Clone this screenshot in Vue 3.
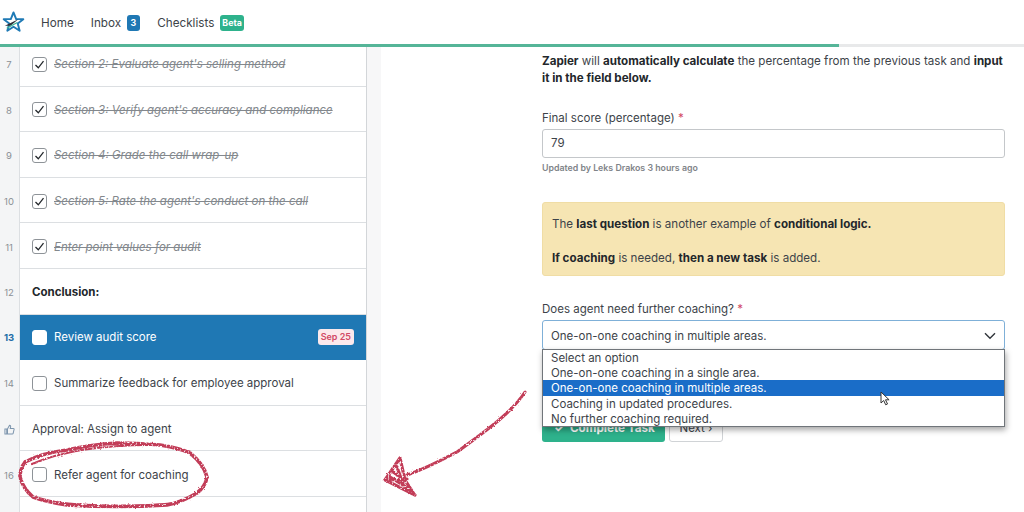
<script setup>
const doneTasks = [
  { num: 7, label: "Section 2: Evaluate agent's selling method" },
  { num: 8, label: "Section 3: Verify agent's accuracy and compliance" },
  { num: 9, label: 'Section 4: Grade the call wrap-up' },
  { num: 10, label: "Section 5: Rate the agent's conduct on the call" },
  { num: 11, label: 'Enter point values for audit' }
]

const options = [
  'Select an option',
  'One-on-one coaching in a single area.',
  'One-on-one coaching in multiple areas.',
  'Coaching in updated procedures.',
  'No further coaching required.'
]
</script>

<template>
  <div class="page">
    <header class="topbar">
      <svg class="logo" width="25" height="25" viewBox="0 0 26 26">
        <path d="M13 2.500l2.800 7h7.400l-5.800 4.600 2 7.500-6.400-4.200-6.400 4.200 2-7.500L2.800 9.500h7.400z" fill="none" stroke="#1f7ab5" stroke-width="2" stroke-linejoin="round" />
        <path d="M4 16.500l14-7-8 7z" fill="#2a2f36" />
        <path d="M6 19l11-6" stroke="#3cb295" stroke-width="1.300" />
      </svg>
      <nav class="nav">
        <span class="nav-item">Home</span>
        <span class="nav-item">Inbox <b class="badge blue">3</b></span>
        <span class="nav-item">Checklists <b class="badge green">Beta</b></span>
      </nav>
    </header>
    <div class="progress"><div class="progress-fill"></div></div>

    <div class="content">
      <aside class="sidebar">
        <div v-for="t in doneTasks" :key="t.num" class="row">
          <div class="num">{{ t.num }}</div>
          <div class="cell done">
            <span class="check">
              <svg width="11" height="11" viewBox="0 0 11 11"><path d="M1.500 6l2.800 2.800 5.200-6.600" fill="none" stroke="#23272b" stroke-width="1.300" /></svg>
            </span>
            <span class="label">{{ t.label }}</span>
          </div>
        </div>

        <div class="row">
          <div class="num">12</div>
          <div class="cell"><strong class="heading">Conclusion:</strong></div>
        </div>

        <div class="row">
          <div class="num current">13</div>
          <div class="cell active">
            <span class="check white"></span>
            <span class="label">Review audit score</span>
            <span class="due">Sep 25</span>
          </div>
        </div>

        <div class="row">
          <div class="num">14</div>
          <div class="cell">
            <span class="check"></span>
            <span class="label">Summarize feedback for employee approval</span>
          </div>
        </div>

        <div class="row">
          <div class="num">
            <svg width="11" height="11" viewBox="0 0 12 12"><path d="M1 5.500h2v5.500H1zM3.800 5.500L6 1.500c1 0 1.500.8 1.200 1.800L6.800 4.800h3.400c.7 0 1 .6.800 1.200l-1 4.200c-.1.500-.5.800-1 .8H3.800z" fill="none" stroke="#7d95ad" stroke-width="1.100" /></svg>
          </div>
          <div class="cell"><span class="plain">Approval: Assign to agent</span></div>
        </div>

        <div class="row">
          <div class="num">16</div>
          <div class="cell">
            <span class="check"></span>
            <span class="label">Refer agent for coaching</span>
          </div>
        </div>
        <div class="row">
          <div class="num"></div>
          <div class="cell"></div>
        </div>
      </aside>

      <main class="main">
        <div class="form">
          <p class="intro"><b>Zapier</b> will <b>automatically calculate</b> the percentage from the previous task and <b>input it in the field below.</b></p>

          <label class="field-label">Final score (percentage) <span class="req">*</span></label>
          <div class="input">79</div>
          <div class="hint">Updated by Leks Drakos 3 hours ago</div>

          <div class="notice">
            <p>The <b>last question</b> is another example of <b>conditional logic.</b></p>
            <p><b>If coaching</b> is needed, <b>then a new task</b> is added.</p>
          </div>

          <label class="field-label">Does agent need further coaching? <span class="req">*</span></label>
          <div class="select-wrap">
            <div class="select">
              <span>One-on-one coaching in multiple areas.</span>
              <svg width="12" height="8" viewBox="0 0 12 8"><path d="M1 1.200l5 5 5-5" fill="none" stroke="#30353a" stroke-width="1.400" /></svg>
            </div>
            <ul class="dropdown">
              <li v-for="(o, i) in options" :key="o" :class="{ picked: i === 2 }">{{ o }}</li>
            </ul>
            <svg class="cursor" width="11" height="15" viewBox="0 0 11 15"><path d="M1 1v11l2.700-2.500 2 4.300 1.800-.8-2-4.200h3.600z" fill="#fff" stroke="#333" stroke-width="1" /></svg>
          </div>

          <div class="actions">
            <button class="btn-complete">✓ &nbsp;Complete Task</button>
            <button class="btn-next">Next ›</button>
          </div>
        </div>
      </main>
    </div>

    <!-- red hand drawn marks on top of the screenshot -->
    <svg class="scribble" width="1024" height="512" viewBox="0 0 1024 512">
      <defs>
        <filter id="rough" filterUnits="userSpaceOnUse" x="0" y="380" width="560" height="132">
          <feTurbulence type="fractalNoise" baseFrequency="0.5" numOctaves="2" seed="4" result="noise" />
          <feDisplacementMap in="SourceGraphic" in2="noise" scale="2.500" result="moved" />
          <feColorMatrix in="noise" type="matrix" values="0 0 0 0 0  0 0 0 0 0  0 0 0 0 0  5 0 0 0 -1.200" result="grain" />
          <feComposite in="moved" in2="grain" operator="in" />
        </filter>
      </defs>
      <g fill="none" stroke="#c23c58" stroke-linecap="round" filter="url(#rough)">
        <path d="M525 392C512 412 490 428 457 452C440 461 425 469 407 475" stroke-width="3" />
        <path d="M400 458L385 480L415 495M400 458L405 480L414 494M385 480L407 479M390 477L411 490M397 467L403 484M393 472L402 478" stroke-width="3.200" />
        <path d="M25 462C38 455 50 452 67 450C85 446 100 444 117 443C135 443 148 444 160 445C172 447 182 449 190 453C200 461 205 469 207 477C206 484 202 489 197 493C187 499 178 503 167 505C135 507 100 507 67 505C55 503 44 501 33 497C26 491 22 485 20 477C20 471 22 466 25 462" stroke-width="3.600" />
        <path d="M32 464C60 452 100 445 150 445M38 499C70 506 130 508 175 503" stroke-width="2.200" />
      </g>
    </svg>
  </div>
</template>

<style>
html, body { margin: 0; background: #fff; overflow: hidden; }
</style>

<style scoped>
.page {
  position: relative;
  width: 1024px;
  height: 512px;
  overflow: hidden;
  font-family: Inter, "Liberation Sans", sans-serif;
  font-size: 11.600px;
  color: #3d4349;
  background: #fff;
}

.topbar {
  display: flex;
  align-items: center;
  height: 44px;
  padding-left: 1px;
}
.logo { margin-right: 15px; }
.nav { display: flex; gap: 17px; margin-top: 1px; }
.nav-item { display: flex; align-items: center; gap: 5.500px; font-size: 11.700px; }
.badge {
  color: #fff;
  font-size: 8.800px;
  font-weight: 700;
  border-radius: 3px;
  line-height: 16px;
}
.blue { background: #1f78b4; padding: 0 4px; }
.green { background: #2eb28c; padding: 0 2.500px; }

.progress { height: 3px; background: #e8e9ea; position: relative; z-index: 1; }
.progress-fill { width: 839px; height: 100%; background: #55b598; }

.content { display: flex; height: 465px; overflow: hidden; }

.sidebar {
  width: 367px;
  height: 480px;
  flex: none;
  background: #fff;
  border-right: 1px solid #d3d6d9;
  box-sizing: border-box;
  margin-top: -6px;
}
.row { display: flex; height: 45.600px; }
.num {
  width: 20px;
  flex: none;
  display: flex;
  align-items: center;
  justify-content: center;
  background: #f4f5f6;
  border-right: 1px solid #dcdfe2;
  font-size: 9.500px;
  color: #8b9095;
  padding: 2px 1px 0 0;
  box-sizing: border-box;
}
.num.current { color: #1f6fa8; font-weight: 700; padding-top: 1px; }
.cell {
  flex: 1;
  display: flex;
  align-items: center;
  padding: 2px 12px 0;
  border-bottom: 1px solid #dcdfe2;
  min-width: 0;
}
.cell.active { background: #1f78b4; color: #fff; border-bottom-color: #1f78b4; padding-top: 1px; }
.check {
  width: 15px;
  height: 15px;
  box-sizing: border-box;
  flex: none;
  margin-right: 7px;
  border: 1px solid #8e9398;
  border-radius: 3px;
  display: flex;
  align-items: center;
  justify-content: center;
  background: #fff;
}
.check.white { border-color: #fff; }
.label, .plain, .heading { font-size: 11.500px; white-space: nowrap; }
.done .label { font-style: italic; color: #83888d; text-decoration: line-through; }
.heading { font-weight: 700; color: #23272b; }
.due {
  margin-left: auto;
  background: #fbe9ec;
  color: #d24a66;
  font-size: 9px;
  font-weight: 600;
  line-height: 16px;
  padding: 0 3px;
  border-radius: 3px;
}

.main { flex: 1; border-left: 14px solid #f7f7f8; padding-left: 161px; background: #fff; }
.form { width: 463px; padding-top: 6px; }
.intro { margin: 0 0 23px; font-size: 11.600px; line-height: 17px; }
b { color: #23272b; font-weight: 700; }
.badge { color: #fff; }
.field-label { display: block; font-size: 11.500px; line-height: 17px; margin-bottom: 2px; }
.req { color: #d24a66; }
.input {
  height: 27px;
  line-height: 27px;
  border: 1px solid #c4c7ca;
  border-radius: 3px;
  padding-left: 8px;
  font-size: 11.500px;
}
.hint { font-size: 8.800px; font-weight: 600; color: #7f8489; margin-top: 4px; margin-bottom: 29px; }
.notice {
  box-sizing: border-box;
  background: #f6e5b3;
  border: 1px solid #f0dda5;
  border-radius: 3px;
  padding: 13px 9px 0;
  height: 74px;
  margin-bottom: 25px;
  font-size: 11.600px;
}
.notice p { margin: 0 0 17px; line-height: 17px; }
.select-wrap { position: relative; }
.select {
  height: 27px;
  border: 1px solid #7fb0d8;
  border-radius: 3px;
  padding: 1px 8px 0;
  display: flex;
  align-items: center;
  justify-content: space-between;
  font-size: 11.500px;
}
.dropdown {
  position: absolute;
  top: 29px;
  left: 0;
  right: 0;
  z-index: 2;
  margin: 0;
  padding: 0;
  list-style: none;
  background: #fff;
  border: 1px solid #70757a;
  box-shadow: 1px 3px 6px rgba(0, 0, 0, 0.35);
  font-size: 11.500px;
  line-height: 14.200px;
}
.dropdown li { padding: 1px 0 0 8px; }
.dropdown li.picked { background: #1a6dc8; color: #fff; }
.cursor { position: absolute; top: 71px; left: 338px; z-index: 3; }
.actions { display: flex; gap: 4px; margin-top: 64px; }
.btn-complete {
  width: 123px;
  height: 28px;
  padding-left: 8px;
  background: #2eb28c;
  color: #fff;
  border: none;
  border-radius: 3px;
  font: 700 11.700px Inter, "Liberation Sans", sans-serif;
}
.btn-next {
  width: 54px;
  height: 28px;
  background: #fff;
  color: #3d4349;
  border: 1px solid #d0d3d6;
  border-radius: 3px;
  font: 11.500px Inter, "Liberation Sans", sans-serif;
}
.scribble { position: absolute; top: 0; left: 0; pointer-events: none; z-index: 5; }
</style>
